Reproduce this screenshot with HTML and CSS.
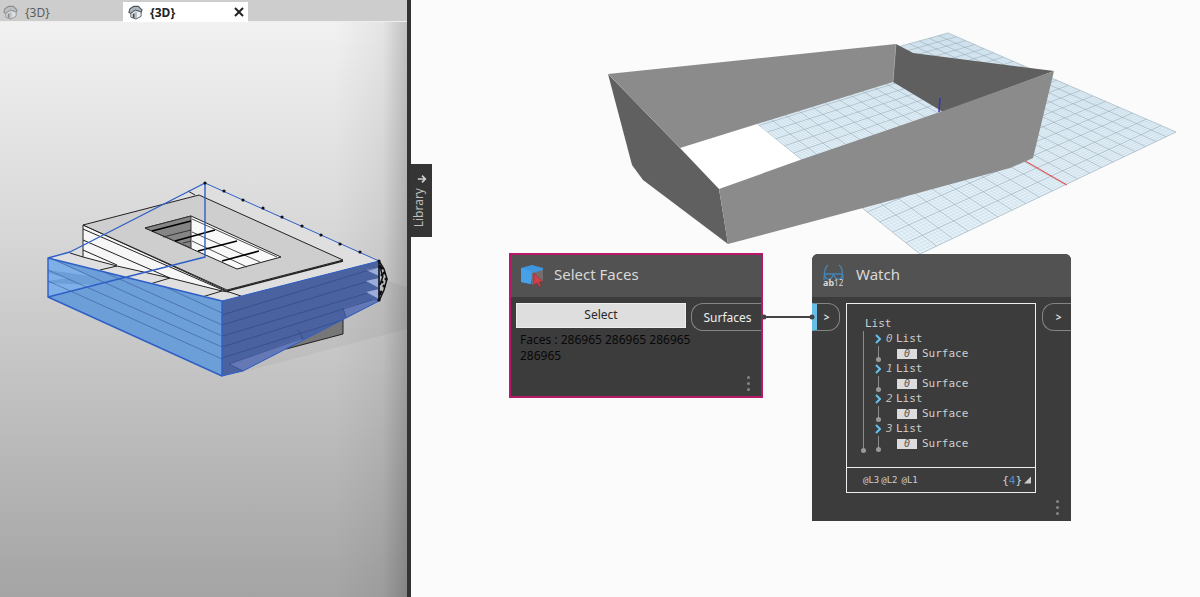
FILE: index.html
```
<!DOCTYPE html>
<html lang="en">
<head>
<meta charset="utf-8">
<title>Select Faces</title>
<link rel="stylesheet" href="styles.css">
</head>
<body>
<svg class="defs" width="0" height="0" aria-hidden="true">
  <symbol id="house" viewBox="0 0 16 16">
    <path d="M1 8 2 4 6 1.500 11 1.500 15 5.500 14 7.500 8 5.500 3 9Z" fill="#aeb6bd" stroke="#4b535b" stroke-width="1.200"/>
    <path d="M3 9 8 5.500 14 7.500V12L8.500 15 3 13Z" fill="#eef1f3" stroke="#565e66" stroke-width="1"/>
    <path d="M5 9.500 7 8.500V14L5 13.300Z" fill="#3f474f"/>
    <path d="M8.500 7V15" stroke="#7e868d"/>
  </symbol>
</svg>
<main class="workspace">
  <section class="model" aria-label="Model view">
    <nav class="tabs">
      <button class="tab tab-idle"><svg class="tab-icon"><use href="#house"/></svg>{3D}</button>
      <div class="tab tab-active"><svg class="tab-icon"><use href="#house"/></svg><span>{3D}</span><button class="close" aria-label="Close"><svg viewBox="0 0 10 10"><path d="M1 1 9 9M9 1 1 9"/></svg></button></div>
    </nav>
    <svg class="building" viewBox="0 22 407 575" preserveAspectRatio="xMinYMin meet" role="img" aria-label="Building with selected faces">
      <path d="M379 278 407 287V329L244 372Z" fill="#000" opacity=".04"/>
      <path d="M286 349 300 338 343 310V334Z" fill="#777" stroke="#222"/>
      <path d="M205 183 379 261 222 301 48 258 70 252Z" fill="#dfdfdf"/>
      <g stroke="#222" stroke-width="1" stroke-linejoin="round">
        <path d="M83 225V257L117 266 170 278 222 291 229 292Z" fill="#f6f6f6"/>
        <path d="M70 253 83 257M83 229 225 291M83 240 170 278M83 250 117 265M117 266 100 270M170 278 150 284M222 291 202 297M229 292 241 296M188 191 195 195" fill="none"/>
        <path d="M83 225 199 195 343 260 227 290Z" fill="#cecece"/>
        <path d="M227 291 343 261" stroke-width="1.600"/>
        <path d="M145 228 191 216 281 257 237 269Z" fill="#f9f9f9"/>
        <path d="M145 228 191 216V248Z" fill="#858585" stroke="#333"/>
        <path d="M192 219 277 257M192 232 260 262M192 241 247 267M163 237 191 230M183 243 191 241" fill="none" stroke-width=".8"/>
        <path d="M152 231 191 221M175 241 215 230M198 251 237 241M222 261 259 251" fill="none" stroke="#000" stroke-width="1.700"/>
      </g>
      <path d="M48 258 222 301V376L48 297Z" fill="#6c9ed8"/>
      <path d="M48 258 90 276 48 270ZM48 273 68 278 48 281ZM48 283 95 285 48 297Z" fill="#86b4ec" opacity=".75"/>
      <path d="M222 301 379 261V301L243 371 222 376Z" fill="#4a629f"/>
      <path d="M366 270 379 267V276ZM366 281 379 278V288ZM366 292 379 289V299Z" fill="#9cacd8"/>
      <path d="M343 308 372 300 379 301 346 317ZM229 364 300 338 303 340 243 371Z" fill="#6478b6"/>
      <g fill="none" stroke="#2d4786" stroke-width=".8">
        <path d="M163 286 222 313M104 272 222 325M55 260 222 336M48 270 222 347M48 281 222 359" opacity=".6"/>
        <path d="M222 315 379 267M222 325 366 282M222 336 368 293M222 347 372 300M222 358 343 320M229 364 303 338 297 329M243 371 229 364M343 308 346 317" opacity=".8"/>
      </g>
      <g fill="none" stroke="#2f5fc6" stroke-width="1.400" stroke-linejoin="round">
        <path d="M48 297 205 257V183L70 252 48 258 222 301V376L48 297V258"/>
        <path d="M222 301 379 261M222 376 243 371 379 301M205 183 379 261V301" stroke-width="1"/>
      </g>
      <path d="M379 261 384 269 387 279 384 290 379 301M380 265 382 275M380 285 383 276M379 261V301" fill="none" stroke="#111" stroke-width="1.500"/>
      <path d="M205 183h0M224 191h0M243 200h0M263 208h0M282 217h0M302 226h0M321 235h0M340 244h0M360 252h0M379 261h0M380 267h0M382 268h0M384 273h0M382 275h0M386 279h0M382 282h0M384 286h0M380 294h0M381 292h0M379 300h0" stroke="#101018" stroke-width="3.200" stroke-linecap="round"/>
    </svg>
  </section>
  <section class="canvas" aria-label="Graph">
    <svg class="preview" width="789" height="597" viewBox="411 0 789 597" role="img" aria-label="Surface preview">
      <path d="M722 96 948 33 1176 132 920 254Z" fill="#e6f1f8"/>
      <path id="minor" fill="none" stroke="#8fb4cc" stroke-width=".4" opacity=".45"/>
      <path id="major" fill="none" stroke="#8a9fac" stroke-width=".6" opacity=".75"/>
      <path d="M680 148 600 74 722 80 757 124 801 160 719 189Z" fill="#fff"/>
      <path d="M940 112 1067 185" stroke="#ee3b3b"/>
      <path d="M896 44 913 53 1054 71 943 112 893 82Z" fill="#5f5f5f"/>
      <path d="M600 20H880L896 44 608 74Z" fill="#fbfbfb"/>
      <path d="M608 74 896 44 893 82 757 124 680 148Z" fill="#8b8b8b"/>
      <path d="M896 44 893 82" stroke="#aaa" stroke-width=".6"/>
      <path d="M600 74H608L680 148 660 190 600 160Z" fill="#fbfbfb"/>
      <path d="M608 74 680 148 719 189 728 244 643 180 632 165Z" fill="#606060"/>
      <path d="M940 98 939 112" stroke="#3434b8" stroke-width="1.500"/>
      <path d="M719 189 800 160 943 111 1054 71 1033 158 1010 168 863 208 728 244Z" fill="#8b8b8b"/>
    </svg>
    <button class="library"><span>Library</span><svg viewBox="0 0 12 12"><path d="M6 1V10M2 6 6 10 10 6"/></svg></button>
    <svg class="wire" viewBox="0 0 54 8"><path d="M4 4H50"/><circle cx="3" cy="4" r="2.500"/><circle cx="51" cy="4" r="2.500"/></svg>

    <article class="node select-node">
      <header class="node-head">
        <svg class="node-icon" viewBox="0 0 24 24"><path d="M1 4 12 1 23 4V9H13L11 20 1 18Z" fill="#3d96df"/><path d="M1 4 11 7V20L1 18Z" fill="#48a1e8"/><path d="M12 9 23 6V17L12 21Z" fill="#756d6c"/><path d="M14 9 23 18 19 18 21 22 19 23 17 19 14 21Z" fill="#d43f4a" stroke="#7c3036" stroke-width=".6"/></svg>
        <h2>Select Faces</h2>
      </header>
      <div class="select-body">
        <div class="select-main">
          <button class="select-button">Select</button>
          <p>Faces : 286965 286965 286965 286965</p>
        </div>
        <div class="port port-out">Surfaces</div>
      </div>
      <span class="dots"><i></i><i></i><i></i></span>
    </article>

    <article class="node watch-node">
      <header class="node-head">
        <svg class="node-icon" viewBox="0 0 24 24"><g fill="none" stroke="#4684b5" stroke-width="1.300"><path d="M6 1C3 3 2 7 2 16M17 1C20 3 21 7 21 16M2 10H21M3 11C3 16 9 17 11 11M12 11C14 17 20 16 20 11"/></g><text x="1" y="22">ab<tspan class="digits">12</tspan></text></svg>
        <h2>Watch</h2>
      </header>
      <div class="watch-body">
        <div class="port port-in">&gt;</div>
        <div class="watch-box">
          <div class="tree">
            <div class="row">List</div>
            <ul class="root">
              <li><div class="row"><svg class="chev" viewBox="0 0 6 10"><path d="M1 1 5 5 1 9"/></svg><em>0</em>List</div><div class="row leaf"><b>0</b>Surface</div></li>
              <li><div class="row"><svg class="chev" viewBox="0 0 6 10"><path d="M1 1 5 5 1 9"/></svg><em>1</em>List</div><div class="row leaf"><b>0</b>Surface</div></li>
              <li><div class="row"><svg class="chev" viewBox="0 0 6 10"><path d="M1 1 5 5 1 9"/></svg><em>2</em>List</div><div class="row leaf"><b>0</b>Surface</div></li>
              <li><div class="row"><svg class="chev" viewBox="0 0 6 10"><path d="M1 1 5 5 1 9"/></svg><em>3</em>List</div><div class="row leaf"><b>0</b>Surface</div></li>
            </ul>
          </div>
          <footer class="levels"><span>@L3</span><span>@L2</span><span class="last">@L1</span><span class="count">{<strong>4</strong>}</span><svg class="grip" viewBox="0 0 8 8"><path d="M8 0V8H0Z"/></svg></footer>
        </div>
        <div class="port port-next">&gt;</div>
      </div>
      <span class="dots"><i></i><i></i><i></i></span>
    </article>
  </section>
</main>
<script src="grid.js"></script>
</body>
</html>
```

FILE: styles.css
```
* { box-sizing: border-box; }
body { margin: 0; font-family: "Noto Sans", "Open Sans", sans-serif; background: #fbfbfb; }
button { border: 0; padding: 0; font: inherit; color: inherit; background: none; }
h2, p, ul { margin: 0; padding: 0; font-weight: 400; }
.defs { position: absolute; }
.workspace { display: flex; min-height: 100vh; overflow: hidden; }

.model {
  width: calc(34% - 1px);
  flex: none;
  display: flex;
  flex-direction: column;
  background: linear-gradient(90deg, transparent 82%, rgba(0,0,0,.05) 94%, rgba(0,0,0,.2)), linear-gradient(#f4f4f4, #dcdcdc 33%, #c4c4c4 62%, #a4a4a4);
}
.tabs { display: flex; height: 22px; padding-top: 2px; background: #cdcdcd; border-bottom: 1px solid #eee; }
.tab { display: flex; align-items: center; gap: 9px; height: 20px; font-size: 12px; }
.tab-icon { width: 15px; height: 15px; }
.tab-idle { width: 123px; padding-left: 3px; gap: 7px; color: #5c5c5c; }
.tab-idle .tab-icon { opacity: .5; }
.tab-active { width: 125px; padding: 0 4px 0 5px; gap: 7px; background: #fff; color: #222; font-weight: 700; }
.close { display: flex; margin-left: auto; }
.close svg { width: 10px; height: 10px; fill: none; stroke: #222; stroke-width: 2; }
.building { display: block; width: 100%; }

.canvas { position: relative; flex: 1; min-width: 0; border-left: 4px solid #333; background: #fbfbfb; }
.preview { position: absolute; left: 0; top: 0; }
.library {
  position: absolute; left: 0; top: 164px; width: 21px; height: 73px;
  display: flex; flex-direction: column-reverse; align-items: center; justify-content: center; gap: 4px;
  padding-right: 5px;
  background: #353535; color: #bdbdbd; font-size: 12px; line-height: 16px;
}
.library span { writing-mode: vertical-rl; transform: rotate(180deg); }
.library svg { width: 10px; height: 10px; margin-left: 5px; fill: none; stroke: #d0d0d0; stroke-width: 2; transform: rotate(-90deg); }
.wire { position: absolute; left: 350px; top: 313px; width: 54px; height: 8px; z-index: 1; stroke: #444; stroke-width: 2; fill: #444; }
.wire circle { stroke: none; }

.node { position: absolute; background: #3c3c3c; color: #d8d8d8; }
.node-head { display: flex; align-items: center; height: 43px; background: #525252; }
.node-head h2 { font-size: 15px; line-height: 20px; padding-bottom: 4px; }
.node-icon { width: 24px; height: 24px; }
.node-icon text { font-size: 9px; font-weight: 700; fill: #d8d8d8; }
.node-icon .digits { font-size: 8px; font-weight: 400; }
.port { display: flex; align-items: center; justify-content: center; height: 28px; border: 1px solid #858585; font-size: 12px; color: #eee; }
.dots { position: absolute; display: grid; gap: 3px; }
.dots i { width: 3px; height: 3px; border-radius: 50%; background: #858585; }

.select-node { left: 98px; top: 253px; width: 254px; height: 145px; border: 2px solid #b81868; }
.select-node .node-head { height: 42px; padding-left: 9px; gap: 10px; }
.select-body { display: flex; align-items: flex-start; gap: 5px; padding: 6px 0 0 5px; }
.select-main { flex: 1; min-width: 0; }
.select-button { display: block; width: 100%; height: 25px; border: 1px solid #eee; background: #dedede; color: #282828; font-size: 12px; line-height: 22px; padding-bottom: 1px; }
.select-main p { padding: 4px 0 0 4px; margin-right: -12px; color: #080808; font-size: 12px; line-height: 16px; }
.port-out { width: 70px; padding-left: 2px; border-right: 0; border-radius: 12px 0 0 12px; }
.select-node .dots { right: 11px; bottom: 5px; }

.watch-node { left: 401px; top: 254px; width: 259px; height: 267px; border-radius: 6px 6px 0 0; overflow: hidden; }
.watch-node .node-head { padding-left: 10px; gap: 10px; }
.watch-body { display: flex; align-items: flex-start; gap: 6px; padding-top: 6px; }
.watch-body .port { font-size: 10px; font-weight: 700; color: #ddd; }
.watch-body .port-in { width: 28px; padding-right: 3px; border-left: 5px solid #67bde6; border-radius: 0 12px 12px 0; }
.port-next { width: 29px; padding-left: 3px; border-right: 0; border-radius: 12px 0 0 12px; }
.watch-box { flex: 1; border: 1px solid #eee; font-family: "DejaVu Sans Mono", monospace; font-size: 11px; color: #cfcfcf; }
.tree { height: 163px; padding: 12px 0 0 18px; }
.row { display: flex; align-items: center; height: 15px; }
.root { position: relative; list-style: none; padding-left: 10px; }
.root::before { content: ""; position: absolute; left: -2px; top: 0; width: 1px; height: 121px; background: #8b8b8b; }
.root::after { content: ""; position: absolute; left: -4px; top: 117px; width: 5px; height: 5px; border-radius: 50%; background: #999; }
.chev { width: 6px; height: 10px; margin-right: 5px; fill: none; stroke: #67c0ea; stroke-width: 2; }
.row em { width: 10px; font-size: 11px; color: #bbb; }
.leaf { position: relative; padding-left: 22px; gap: 5px; }
.leaf::before { content: ""; position: absolute; left: 3px; top: 0; width: 1px; height: 13px; background: #8b8b8b; }
.leaf::after { content: ""; position: absolute; left: 1px; top: 11px; width: 5px; height: 5px; border-radius: 50%; background: #999; }
.leaf b { width: 20px; height: 10px; background: #dcdcdc; color: #555; font-size: 10px; font-weight: 400; font-style: italic; line-height: 10px; text-align: center; }
.levels { display: flex; align-items: center; gap: 2px; height: 25px; padding: 0 4px 0 16px; border-top: 1px solid #eee; font-size: 9px; }
.levels .last { margin-left: 2px; }
.count { margin-left: auto; font-size: 11px; }
.count strong { color: #4d91c2; font-weight: 400; }
.grip { width: 7px; height: 8px; fill: #ccc; }
.watch-node .dots { right: 12px; bottom: 6px; }
```

FILE: grid.js
```
// Perspective ground grid: maps the unit square onto the four plane corners.
const [p0, p1, p2, p3] = [[722, 96], [948, 33], [1176, 132], [920, 254]];
const dx1 = p1[0] - p2[0], dx2 = p3[0] - p2[0], sx = p0[0] - p1[0] + p2[0] - p3[0];
const dy1 = p1[1] - p2[1], dy2 = p3[1] - p2[1], sy = p0[1] - p1[1] + p2[1] - p3[1];
const det = dx1 * dy2 - dx2 * dy1;
const g = (sx * dy2 - dx2 * sy) / det;
const h = (dx1 * sy - sx * dy1) / det;
const project = (u, v) => {
  const w = g * u + h * v + 1;
  return [0, 1].map(i =>
    (((p1[i] - p0[i] + g * p1[i]) * u + (p3[i] - p0[i] + h * p3[i]) * v + p0[i]) / w).toFixed(1)
  ).join(" ");
};
const lines = n => {
  let d = "";
  for (let i = 0; i <= n; i++) {
    const t = i / n;
    d += `M${project(t, 0)}L${project(t, 1)}M${project(0, t)}L${project(1, t)}`;
  }
  return d;
};
document.getElementById("minor").setAttribute("d", lines(100));
document.getElementById("major").setAttribute("d", lines(20));
```
